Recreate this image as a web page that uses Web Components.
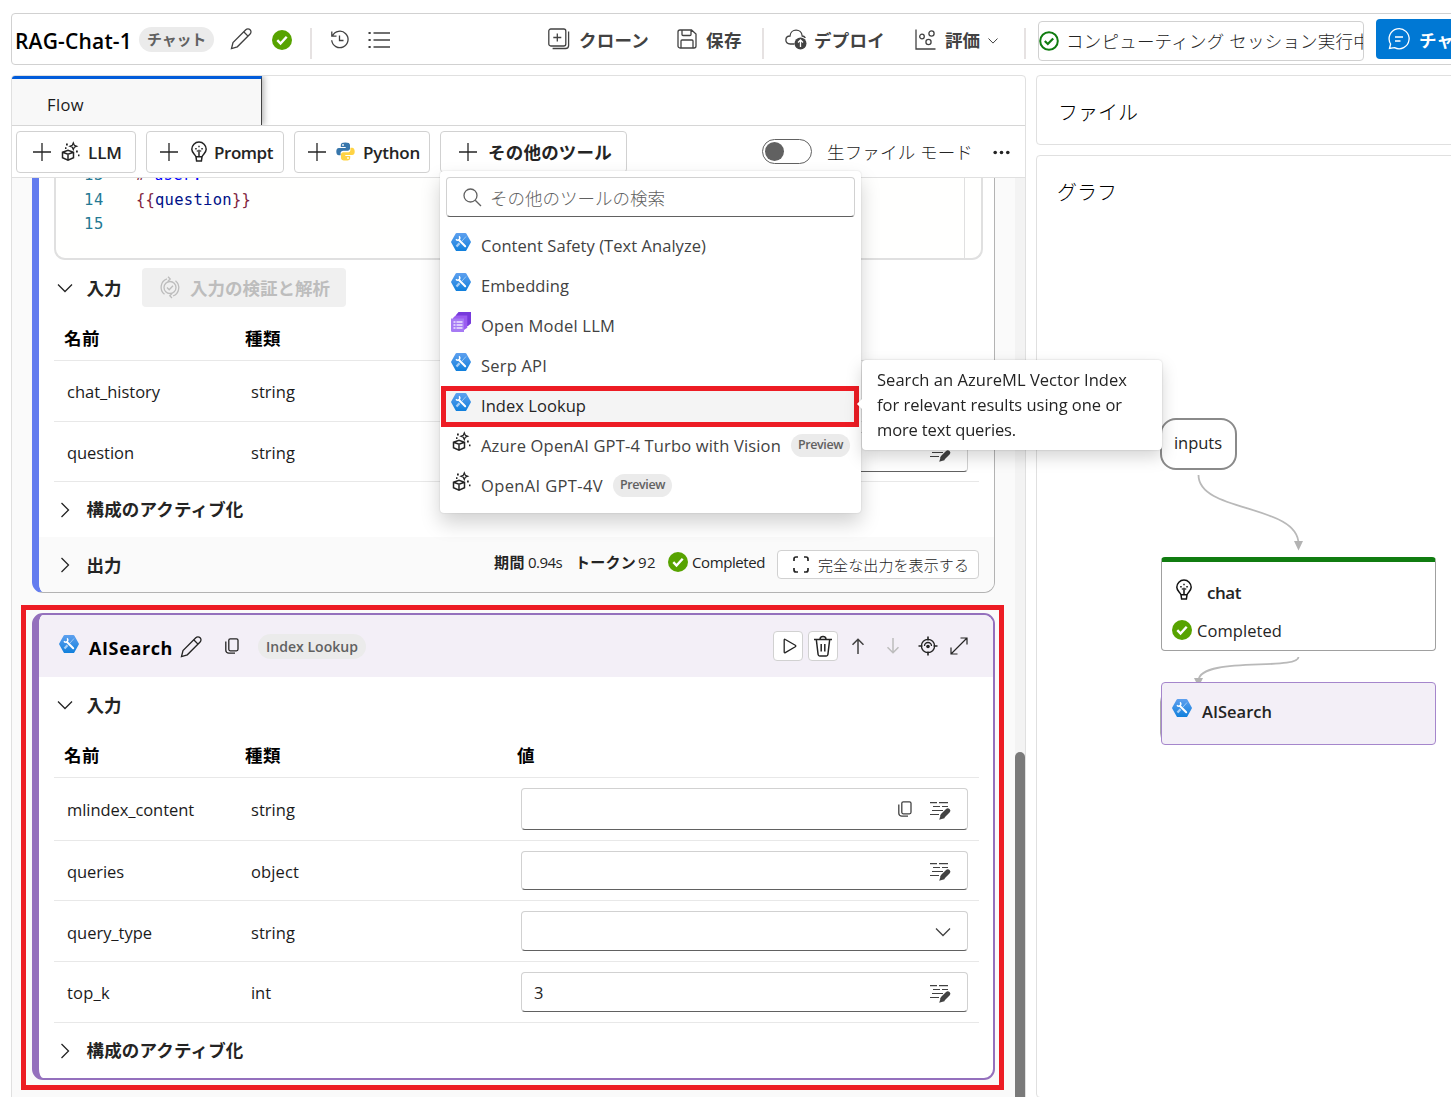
<!DOCTYPE html>
<html lang="ja">
<head>
<meta charset="utf-8">
<title>RAG-Chat-1</title>
<style>
    html, body {
        margin: 0;
        height: 1097px;
        overflow: hidden;
        background: #fff;
        color: #242424;
        font: 16.5px/24px "Open Sans", "Noto Sans CJK JP", sans-serif;
    }
</style>
</head>
<body>
<flow-page></flow-page>

<script>
const HEX = `
    <defs><linearGradient id="g" x2="0" y2="1"><stop stop-color="#5ea0ef"/><stop offset="1" stop-color="#1180dc"/></linearGradient></defs>
    <path fill="url(#g)" stroke="none" d="M5.6 1h8.8q.6 0 .9.5l4.500 8q.3.500 0 1l-4.500 8q-.3.500-.9.500H5.600q-.6 0-.9-.5l-4.500-8q-.3-.5 0-1l4.500-8q.3-.5.9-.5z"/>
    <path stroke="#9cc9f5" stroke-width="1" d="M15 4.500 11 9"/><path stroke="#a8d0f7" stroke-width="2.200" d="M8.500 11.300 5.500 14.500"/>
    <path stroke="#fff" stroke-width="2" stroke-linecap="round" d="M8 8l6.200 6.200"/>
    <path stroke="#fff" stroke-width="1.500" d="M5 7.300q1.500 1.700 3.300.2 1.200-1.600-.1-3.300"/>`;

// name: [width, height, markup]
const ICONS = {
    pencil: [22, 23, `<path d="M1.500 21.500 3 15.500 15.800 2.700a3 3 0 0 1 4.300 4.300L7.300 19.800z"/><path d="m13.700 4.800 4.300 4.300"/>`],
    ok: [20, 20, `<circle cx="10" cy="10" r="10" fill="#57a300" stroke="none"/><path stroke="#fff" stroke-width="2.400" d="m5.300 10.200 3.200 3.300 6.200-6.800"/>`],
    okRing: [20, 20, `<circle cx="10" cy="10" r="8.800" stroke="#107c10" stroke-width="2"/><path stroke="#107c10" stroke-width="2.200" d="m5.800 10 3 3 5.400-5.600"/>`],
    history: [20, 20, `<path d="M2.500 5.800a8.200 8.200 0 1 1-.8 4.500M1.800 1.500v4.600h4.700M9.500 5.500v5h4"/>`],
    list: [22, 18, `<path d="M5.500 2H22M5.500 9H22M5.500 16H22"/><path stroke-width="2.200" d="M.5 2h2.200M.5 9h2.200M.5 16h2.200"/>`],
    clone: [22, 22, `<rect x=".8" y="1" width="17" height="17" rx="2"/><path d="M9.300 5.500v8M5.300 9.500h8M20.600 3.500v14a3 3 0 0 1-3 3h-13"/>`],
    save: [20, 20, `<path d="M3 1h11.500L19 5v12a2 2 0 0 1-2 2H3a2 2 0 0 1-2-2V3a2 2 0 0 1 2-2zM5 1v4.500q0 1 1 1h7q1 0 1-1V1M4 19v-7q0-1 1-1h10q1 0 1 1v7"/>`],
    cloud: [22, 21, `<path d="M9.500 15H5.200C-.8 15-.3 7 5 7c.5-7.500 11.500-8 12.200 0 1.300 0 2.500.8 3.200 1.800"/><circle cx="15.500" cy="14.500" r="6" fill="currentColor" stroke="none"/><path stroke="#fff" d="M15.500 18v-6.500M13 13.500l2.500-2.500 2.500 2.500"/>`],
    scatter: [21, 21, `<path d="M1 .5V20h19.500"/><circle cx="7" cy="7.500" r="2.300"/><circle cx="16.500" cy="4.500" r="2.600"/><circle cx="13.500" cy="13" r="2.600"/>`],
    chevronSmall: [10, 6, `<path stroke-width="1" d="m.5.500 4.500 4.600L9.500.5"/>`],
    chevronDown: [16, 10, `<path d="m1 1.500 7 7 7-7"/>`],
    chevronRight: [10, 16, `<path d="m1.500 1 7 7-7 7"/>`],
    chat: [22, 22, `<path d="M1.500 20.500 2.600 16A10 10 0 1 1 6.500 19.600zM7 9h8M7 13h5.500"/>`],
    plus: [18, 18, `<path d="M9 0v18M0 9h18"/>`],
    cube: [19, 19, `<path stroke-width="1.500" d="m1.500 10.200 5.500-2 5.500 2v5.600L7 18.200l-5.500-2.400zM1.500 10.200 7 12.300l5.500-2.100M7 12.300v5.900"/><path d="m12.300.8 1 2.400 2.500 1-2.500 1-1 2.500-1-2.500-2.500-1 2.500-1z" stroke-width="1.200"/><path stroke-width="1.800" d="M5 2.500h1.800M15 9.500h1.800M4 6.200h1.500M17 13.300h1.500"/>`],
    bulb: [16, 20, `<path stroke-width="1.500" d="M5 14.800C4.500 12.500.8 11 .8 7.300a7.200 7.200 0 0 1 14.400 0c0 3.700-3.700 5.200-4.200 7.500zM5 14.800l.6 4.300h4.800l.6-4.300M8 14.500V7.800"/><path stroke-width="1.500" d="M4.200 6.800h1.500M10.300 6.800h1.500M7.300 4.500h1.400M5.800 9h1M9.200 9h1"/>`],
    python: [19, 19, `<path fill="#3776ab" stroke="none" d="M9.300.5c-3 0-4.500.8-4.500 2.600v2h4.900v.8H2.900C1 5.900.3 7.500.3 9.500s.8 3.800 2.600 3.800h1.700v-2.200c0-1.400 1.200-2.300 2.500-2.300h4.700c1.200 0 2.200-1 2.200-2.200V3.100c0-1.800-1.700-2.600-4.700-2.600z"/><path fill="#ffd343" stroke="none" d="M9.700 18.500c3 0 4.500-.8 4.500-2.600v-2H9.300v-.8h6.800c1.900 0 2.600-1.600 2.600-3.600s-.8-3.800-2.600-3.800h-1.700v2.200c0 1.400-1.200 2.300-2.500 2.300H7.200c-1.200 0-2.200 1-2.200 2.200v3.500c0 1.800 1.700 2.600 4.700 2.600z"/><circle cx="7" cy="3" r=".9" fill="#fff" stroke="none"/><circle cx="12" cy="16" r=".9" fill="#fff" stroke="none"/>`],
    dots: [17, 5, `<g fill="currentColor" stroke="none"><circle cx="2.200" cy="2.500" r="1.800"/><circle cx="8.500" cy="2.500" r="1.800"/><circle cx="14.800" cy="2.500" r="1.800"/></g>`],
    search: [19, 19, `<circle cx="7.500" cy="7.500" r="6.500"/><path d="m12.200 12.200 5.800 5.800"/>`],
    hex: [20, 20, HEX],
    layers: [20, 20, `<path fill="#773adc" stroke="none" d="M7.500 0H20v11.500L17 14H5V3z"/><path fill="#9b5cf0" stroke="none" d="M4.500 3.500h11.800v12.300L13 18H2V6z"/><path fill="#a67af4" stroke="none" d="M0 6.500h13V20H1.500Q0 20 0 18.500z"/><path stroke="#f0e6ff" stroke-width="1.700" d="M2.500 10h2M5.500 10h6M2.500 13h2M5.500 13h6M2.500 16h2M5.500 16h6"/>`],
    verify: [20, 23, `<path d="M7 2.800a9 9 0 0 0-2.500 15.500M13 20a9 9 0 0 0 2.500-15.300M8 .8l2.200 2.200L8 5.200M12 22l-2.200-2.200L12 17.600"/><circle cx="10" cy="11.500" r="6"/><path d="m7 11.500 2.200 2.200 3.800-4"/>`],
    copy: [14, 16, `<rect x="3.800" y=".8" width="9.200" height="12" rx="1.500"/><path d="M.8 3.500v8.700a3 3 0 0 0 3 3H10"/>`],
    play: [14, 16, `<path d="M1.200 2v12q0 1.200 1.100.6l10-5.800q1-.8 0-1.500l-10-5.800Q1.200.8 1.200 2z"/>`],
    trash: [20, 22, `<path stroke-width="1.500" d="M1 4.500h18M3.300 4.500l1.800 15q.2 1.500 1.600 1.500h6.600q1.400 0 1.600-1.500l1.800-15M7 4.500q0-3 3-3t3 3M8.200 9v7.500M11.800 9v7.500"/>`],
    up: [14, 16, `<path stroke-width="1.500" d="M7 16V1M1.500 6.800 7 1.200l5.500 5.600"/>`],
    down: [14, 16, `<path stroke-width="1.500" d="M7 0v15M1.500 9.200 7 14.800l5.500-5.600"/>`],
    target: [20, 20, `<circle cx="10" cy="10" r="6.600"/><path stroke-width="1.600" d="M10 .5v4M10 15.500v4M.5 10h4M15.500 10h4"/><path d="M6.500 10a3.500 3.500 0 0 1 7 0"/><circle cx="10" cy="10.500" r="1.800" fill="currentColor" stroke="none"/>`],
    expand: [18, 18, `<path stroke-width="1.200" d="M1.500 16.500l15-15M10.500 1h6.500v6.500M1 10.500V17h6.500"/>`],
    frame: [16, 17, `<path stroke-width="1.700" d="M1 5V3q0-2 2-2h2M11 1h2q2 0 2 2v2M15 12v2q0 2-2 2h-2M5 16H3q-2 0-2-2v-2"/>`],
    edit: [22, 19, `<path stroke-width="1.200" d="M1 1.700h7M10 1.700h9M4 5.500h7M13 5.500h6M3 9.500h11M1 13.500h9"/><path stroke-width="5" stroke-linecap="round" d="M18.800 9.800 14 14.600"/><path fill="currentColor" stroke="none" d="m12 13-1.800 5.800L16 17z"/>`]
};

class UiIcon extends HTMLElement {
    connectedCallback() {
        const [w, h, art] = ICONS[this.getAttribute('name')];
        this.attachShadow({ mode: 'open' }).innerHTML = `
            <style>
                :host { display: block; flex: none; width: ${w}px; height: ${h}px; }
                svg { display: block; overflow: visible; }
            </style>
            <svg width="${w}" height="${h}" viewBox="0 0 ${w} ${h}" fill="none" stroke="currentColor" stroke-width="1.3">${art}</svg>
        `;
    }
}
customElements.define('ui-icon', UiIcon);

// One line of text, tracked so that it fills the width in "w"
class FitText extends HTMLElement {
    connectedCallback() {
        const w = Number(this.getAttribute('w'));
        this.attachShadow({ mode: 'open' }).innerHTML = `
            <style>
                :host { display: block; flex: none; width: ${w}px; white-space: nowrap; }
                :host([light]) { font-weight: 300; }
                :host([semi]) { font-weight: 600; }
                :host([bold]) { font-weight: 700; }
                span { display: inline-block; }
            </style>
            <span><slot></slot></span>
        `;
        const span = this.shadowRoot.querySelector('span');
        const gap = (w - span.getBoundingClientRect().width) / this.textContent.length;
        span.style.letterSpacing = gap.toFixed(3) + 'px';
    }
}
customElements.define('fit-text', FitText);

class UiPill extends HTMLElement {
    connectedCallback() {
        this.attachShadow({ mode: 'open' }).innerHTML = `
            <style>
                :host {
                    display: flex;
                    flex: none;
                    align-items: center;
                    box-sizing: border-box;
                    height: 25px;
                    padding: 0 8px;
                    border-radius: 13px;
                    background: #ebebeb;
                    color: #616161;
                    font-weight: 600;
                    font-size: 14px;
                }
            </style>
            <slot></slot>
        `;
    }
}
customElements.define('ui-pill', UiPill);

class AppHeader extends HTMLElement {
    connectedCallback() {
        this.attachShadow({ mode: 'open' }).innerHTML = `
            <style>
                :host {
                    display: flex;
                    align-items: center;
                    box-sizing: border-box;
                    width: 1520px;
                    height: 52px;
                    border: 1px solid #d1d1d1;
                    border-radius: 4px;
                    color: #424242;
                    font-size: 17.5px;
                }
                .title { color: #000; font-size: 21px; margin: 4px 7px 0 3px; }
                .rule { flex: none; width: 2px; height: 31px; background: #e6e2e2; margin-top: 9px; }
                .session {
                    display: flex;
                    flex: none;
                    align-items: center;
                    box-sizing: border-box;
                    width: 326px;
                    height: 40px;
                    margin: 3px 12px 0 12px;
                    border: 1px solid #d1d1d1;
                    border-radius: 4px;
                    overflow: hidden;
                    color: #242424;
                }
                .chat {
                    display: flex;
                    align-items: center;
                    flex: none;
                    width: 140px;
                    height: 40px;
                    border-radius: 4px 0 0 4px;
                    background: #0078d4;
                    color: #fff;
                }
            </style>
            <fit-text class="title" semi w="117">RAG-Chat-1</fit-text>
            <ui-pill><fit-text bold w="59" style="font-size:15px">チャット</fit-text></ui-pill>
            <ui-icon name="pencil" style="margin:-1px 0 0 16px"></ui-icon>
            <ui-icon name="ok" style="margin:2px 0 0 20px"></ui-icon>
            <div class="rule" style="margin-left:18px"></div>
            <ui-icon name="history" style="margin:1px 0 0 18px"></ui-icon>
            <ui-icon name="list" style="margin:1px 0 0 18px"></ui-icon>
            <ui-icon name="clone" style="margin-left:158px"></ui-icon>
            <fit-text bold w="70" style="margin:1px 0 0 9px">クローン</fit-text>
            <ui-icon name="save" style="margin-left:28px"></ui-icon>
            <fit-text bold w="36" style="margin:1px 0 0 9px">保存</fit-text>
            <div class="rule" style="margin-left:20px"></div>
            <ui-icon name="cloud" style="margin-left:21px"></ui-icon>
            <fit-text bold w="71" style="margin:1px 0 0 7px">デプロイ</fit-text>
            <ui-icon name="scatter" style="margin-left:30px"></ui-icon>
            <fit-text bold w="35" style="margin:1px 0 0 9px">評価</fit-text>
            <ui-icon name="chevronSmall" style="margin:3px 0 0 8px"></ui-icon>
            <div class="rule" style="margin-left:26px"></div>
            <div class="session">
                <ui-icon name="okRing"></ui-icon>
                <fit-text light w="305" style="margin-left:7px">コンピューティング セッション実行中</fit-text>
            </div>
            <div class="chat">
                <ui-icon name="chat" style="margin-left:12px"></ui-icon>
                <fit-text bold w="70" style="margin:1px 0 0 9px">チャット</fit-text>
            </div>
        `;
    }
}
customElements.define('app-header', AppHeader);

class ToolButton extends HTMLElement {
    connectedCallback() {
        this.attachShadow({ mode: 'open' }).innerHTML = `
            <style>
                :host {
                    display: flex;
                    flex: none;
                    align-items: center;
                    box-sizing: border-box;
                    width: ${this.getAttribute('w')}px;
                    height: 42px;
                    padding-left: ${this.getAttribute('pad')}px;
                    border: 1px solid #d1d1d1;
                    border-radius: 4px;
                    background: #fff;
                    font-size: 17px;
                }
                ::slotted(fit-text) { padding-top: 2px; }
            </style>
            <ui-icon name="plus"></ui-icon>
            <slot></slot>
        `;
    }
}
customElements.define('tool-button', ToolButton);

class FlowToolbar extends HTMLElement {
    connectedCallback() {
        this.attachShadow({ mode: 'open' }).innerHTML = `
            <style>
                :host {
                    display: flex;
                    align-items: center;
                    height: 51px;
                    padding-left: 4px;
                    gap: 10px;
                    border-bottom: 1px solid #e0e0e0;
                    background: #fff;
                }
                .toggle {
                    box-sizing: border-box;
                    width: 50px;
                    height: 25px;
                    margin-left: 125px;
                    padding: 2px;
                    border: 1px solid #616161;
                    border-radius: 13px;
                }
                .knob { width: 19px; height: 19px; border-radius: 50%; background: #616161; }
            </style>
            <tool-button w="120" pad="16">
                <ui-icon name="cube" style="margin-left:10px"></ui-icon>
                <fit-text semi w="34" style="margin-left:8px">LLM</fit-text>
            </tool-button>
            <tool-button w="138" pad="13">
                <ui-icon name="bulb" style="margin-left:13px"></ui-icon>
                <fit-text semi w="59" style="margin-left:7px">Prompt</fit-text>
            </tool-button>
            <tool-button w="136" pad="13">
                <ui-icon name="python" style="margin-left:10px"></ui-icon>
                <fit-text semi w="57" style="margin-left:8px">Python</fit-text>
            </tool-button>
            <tool-button w="187" pad="18">
                <fit-text bold w="124" style="margin-left:11px;padding:0;font-size:17.5px">その他のツール</fit-text>
            </tool-button>
            <div class="toggle"><div class="knob"></div></div>
            <fit-text light w="146" style="margin-left:5px;font-size:17.5px">生ファイル モード</fit-text>
            <ui-icon name="dots" style="margin:1px 0 0 10px"></ui-icon>
        `;
    }
}
customElements.define('flow-toolbar', FlowToolbar);

class CodeBox extends HTMLElement {
    connectedCallback() {
        this.attachShadow({ mode: 'open' }).innerHTML = `
            <style>
                :host {
                    display: flex;
                    box-sizing: border-box;
                    width: 929px;
                    height: 82px;
                    border: 2px solid #e0e0e0;
                    border-top: 0;
                    border-radius: 0 0 11px 11px;
                    background: #fffffe;
                    overflow: hidden;
                }
                .lines { margin-top: -15px; width: 908px; border-right: 1px solid #e0e0e0; }
                .line { display: flex; height: 24.5px; font: 15.5px/24px "DejaVu Sans Mono", monospace; }
                .no { color: #237893; margin-left: 28px; margin-right: 32px; }
                .kw { color: #0000ff; }
                .br { color: #811f3f; }
                .id { color: #001188; }
            </style>
            <div class="lines">
                <div class="line"><fit-text class="no" w="20">13</fit-text><fit-text class="br" w="18">#</fit-text><fit-text class="kw" w="48">user:</fit-text></div>
                <div class="line"><fit-text class="no" w="20">14</fit-text><fit-text class="br" w="19">{{</fit-text><fit-text class="id" w="77">question</fit-text><fit-text class="br" w="19">}}</fit-text></div>
                <div class="line"><fit-text class="no" w="20">15</fit-text></div>
            </div>
        `;
    }
}
customElements.define('code-box', CodeBox);

class SectionRow extends HTMLElement {
    connectedCallback() {
        const open = this.hasAttribute('open');
        this.attachShadow({ mode: 'open' }).innerHTML = `
            <style>
                :host { display: flex; align-items: center; height: ${this.getAttribute('h')}px; font-size: 17.5px; }
                ui-icon { margin-left: ${open ? 18 : 21}px; margin-right: ${open ? 13.5 : 16.5}px; }
                fit-text { margin-right: 20.5px; padding-bottom: 1px; }
            </style>
            <ui-icon name="${open ? 'chevronDown' : 'chevronRight'}"></ui-icon>
            <fit-text bold w="${this.getAttribute('w')}">${this.getAttribute('label')}</fit-text>
            <slot></slot>
        `;
    }
}
customElements.define('section-row', SectionRow);

class ValueField extends HTMLElement {
    connectedCallback() {
        this.attachShadow({ mode: 'open' }).innerHTML = `
            <style>
                :host {
                    display: flex;
                    align-items: center;
                    box-sizing: border-box;
                    width: 447px;
                    padding: 2px 16px 0 12px;
                    border: 1px solid #d1d1d1;
                    border-bottom-color: #616161;
                    border-radius: 4px;
                    background: #fff;
                    color: #424242;
                }
                .value { flex: 1; color: #242424; }
            </style>
            <div class="value">${this.getAttribute('value') || ''}</div>
            <slot></slot>
        `;
    }
}
customElements.define('value-field', ValueField);

class InputRow extends HTMLElement {
    connectedCallback() {
        this.attachShadow({ mode: 'open' }).innerHTML = `
            <style>
                :host {
                    display: grid;
                    grid-template-columns: 184px 270px 1fr;
                    align-items: center;
                    box-sizing: border-box;
                    width: 925px;
                    height: ${this.getAttribute('h')}px;
                    margin-left: 15px;
                    padding-left: 13px;
                    border-bottom: 1px solid #e8e8e8;
                    color: #1b1b1b;
                }
                ::slotted(fit-text) { padding-top: 2px; }
                :host([low]) ::slotted(fit-text) { padding-top: 3px; }
                :host([head]) {
                    grid-template-columns: 181px 272px 1fr;
                    padding-left: 10px;
                    color: #000;
                    font-size: 17.5px;
                }
                :host([head]) ::slotted(fit-text) { padding: 0 0 1px; }
            </style>
            <slot></slot>
        `;
    }
}
customElements.define('input-row', InputRow);

class NodeCard extends HTMLElement {
    connectedCallback() {
        this.attachShadow({ mode: 'open' }).innerHTML = `
            <style>
                :host {
                    display: block;
                    box-sizing: border-box;
                    width: 963px;
                    margin-left: 20px;
                    border: 1px solid #b3b3b3;
                    border-left: 7px solid #637cef;
                    border-radius: 11px;
                    background: #fff;
                    overflow: hidden;
                }
                :host([first]) { border-top: 0; border-top-left-radius: 0; border-top-right-radius: 0; }
                :host([picked]) { border: 2px solid #9470bd; border-left-width: 7px; }
            </style>
            <slot></slot>
        `;
    }
}
customElements.define('node-card', NodeCard);

class NodeHeader extends HTMLElement {
    connectedCallback() {
        this.attachShadow({ mode: 'open' }).innerHTML = `
            <style>
                :host { display: flex; align-items: center; height: 62px; background: #f3eff7; color: #242424; }
                .tools { display: flex; align-items: center; margin-left: auto; margin-right: 25px; }
                .btn {
                    display: flex;
                    align-items: center;
                    justify-content: center;
                    box-sizing: border-box;
                    width: 30px;
                    height: 30px;
                    margin-right: 5px;
                    border: 1px solid #d1d1d1;
                    border-radius: 4px;
                    background: #fff;
                }
            </style>
            <ui-icon name="hex" style="margin:-5px 10px 0 20px"></ui-icon>
            <fit-text bold w="84" style="font-size:18px;color:#000;margin-top:4px">AISearch</fit-text>
            <ui-icon name="pencil" style="margin-left:7px"></ui-icon>
            <ui-icon name="copy" style="margin:0 19px 0 23px"></ui-icon>
            <ui-pill style="margin-top:1px"><fit-text semi w="92">Index Lookup</fit-text></ui-pill>
            <div class="tools">
                <div class="btn"><ui-icon name="play" style="margin-left:3px"></ui-icon></div>
                <div class="btn"><ui-icon name="trash"></ui-icon></div>
                <ui-icon name="up" style="margin-left:8px;color:#424242"></ui-icon>
                <ui-icon name="down" style="margin-left:21px;color:#bdbdbd"></ui-icon>
                <ui-icon name="target" style="margin-left:18px"></ui-icon>
                <ui-icon name="expand" style="margin-left:12px"></ui-icon>
            </div>
        `;
    }
}
customElements.define('node-header', NodeHeader);

class OutputBar extends HTMLElement {
    connectedCallback() {
        this.attachShadow({ mode: 'open' }).innerHTML = `
            <style>
                :host { display: flex; height: 55px; background: #fafafa; font-size: 15px; }
                .stats { display: flex; align-items: center; height: 50px; margin-left: auto; }
                .view {
                    display: flex;
                    align-items: center;
                    box-sizing: border-box;
                    width: 202px;
                    height: 29px;
                    margin: 13px 15px 0 12px;
                    padding-left: 15px;
                    border: 1px solid #d1d1d1;
                    border-radius: 4px;
                    background: #fff;
                }
            </style>
            <section-row h="56" w="35" label="出力"></section-row>
            <div class="stats">
                <fit-text bold w="31">期間</fit-text>
                <fit-text w="34" style="margin-left:3px">0.94s</fit-text>
                <fit-text bold w="61" style="margin-left:13px">トークン</fit-text>
                <fit-text w="18" style="margin-left:2px">92</fit-text>
                <ui-icon name="ok" style="margin-left:12px"></ui-icon>
                <fit-text w="73" style="margin-left:4px">Completed</fit-text>
            </div>
            <div class="view">
                <ui-icon name="frame"></ui-icon>
                <fit-text light w="151" style="margin-left:9px">完全な出力を表示する</fit-text>
            </div>
        `;
    }
}
customElements.define('output-bar', OutputBar);

class MenuItem extends HTMLElement {
    connectedCallback() {
        this.attachShadow({ mode: 'open' }).innerHTML = `
            <style>
                :host { display: flex; align-items: center; height: 40px; padding-left: 11px; color: #424242; }
                :host([marked]) {
                    box-sizing: border-box;
                    height: 41px;
                    margin: 1px 2px -2px 1px;
                    padding-left: 5px;
                    border: 5px solid #ed1c24;
                    background: #f4f4f4;
                    color: #242424;
                }
                ui-icon { margin-top: -7px; margin-right: 10px; }
                fit-text { margin-top: 2px; }
                :host([marked]) ui-icon { margin-top: -9px; }
                :host([marked]) fit-text { margin-top: -1px; }
                ui-pill { margin-left: 10px; height: 23px; padding: 0 7px; font-size: 12.5px; }
            </style>
            <ui-icon name="${this.getAttribute('icon')}" style="width:20px"></ui-icon>
            <fit-text w="${this.getAttribute('w')}">${this.getAttribute('label')}</fit-text>
            ${this.hasAttribute('preview') ? '<ui-pill><fit-text semi w="45" style="margin:0">Preview</fit-text></ui-pill>' : ''}
        `;
    }
}
customElements.define('menu-item', MenuItem);

class ToolMenu extends HTMLElement {
    connectedCallback() {
        this.attachShadow({ mode: 'open' }).innerHTML = `
            <style>
                :host {
                    display: block;
                    box-sizing: border-box;
                    width: 421px;
                    height: 342px;
                    padding-top: 6px;
                    border-radius: 4px;
                    background: #fff;
                    box-shadow: 0 0 2px rgba(0, 0, 0, .14), 0 10px 20px rgba(0, 0, 0, .18);
                }
                .search {
                    display: flex;
                    align-items: center;
                    box-sizing: border-box;
                    width: 409px;
                    height: 40px;
                    margin: 0 0 8px 6px;
                    padding-left: 16px;
                    border: 1px solid #d1d1d1;
                    border-bottom-color: #616161;
                    border-radius: 4px;
                    color: #616161;
                    font-size: 17.5px;
                }
            </style>
            <div class="search">
                <ui-icon name="search"></ui-icon>
                <fit-text light w="175" style="margin:1px 0 0 8px">その他のツールの検索</fit-text>
            </div>
            <menu-item icon="hex" w="225" label="Content Safety (Text Analyze)"></menu-item>
            <menu-item icon="hex" w="88" label="Embedding"></menu-item>
            <menu-item icon="layers" w="134" label="Open Model LLM"></menu-item>
            <menu-item icon="hex" w="66" label="Serp API"></menu-item>
            <menu-item marked icon="hex" w="105" label="Index Lookup"></menu-item>
            <menu-item icon="cube" w="300" label="Azure OpenAI GPT-4 Turbo with Vision" preview></menu-item>
            <menu-item icon="cube" w="122" label="OpenAI GPT-4V" preview></menu-item>
        `;
        // the cube glyphs sit a little further in than the filled badges
        this.shadowRoot.querySelectorAll('[icon="cube"]').forEach(item => {
            item.shadowRoot.querySelector('ui-icon').style.cssText = 'width:20px;margin:-7px 9px 0 1px;color:#242424';
        });
    }
}
customElements.define('tool-menu', ToolMenu);

class HoverTip extends HTMLElement {
    connectedCallback() {
        this.attachShadow({ mode: 'open' }).innerHTML = `
            <style>
                :host {
                    display: block;
                    box-sizing: border-box;
                    width: 300px;
                    height: 90px;
                    padding: 7px 15px;
                    border-radius: 4px;
                    background: #fff;
                    line-height: 25px;
                    filter: drop-shadow(0 0 1px rgba(0, 0, 0, .16)) drop-shadow(0 7px 8px rgba(0, 0, 0, .16));
                }
                i { position: absolute; left: -3px; top: 39px; width: 10px; height: 10px; background: #fff; transform: rotate(45deg); }
            </style>
            <i></i>
            <fit-text w="250">Search an AzureML Vector Index</fit-text>
            <fit-text w="245">for relevant results using one or</fit-text>
            <fit-text w="139">more text queries.</fit-text>
        `;
    }
}
customElements.define('hover-tip', HoverTip);

class FlowGraph extends HTMLElement {
    connectedCallback() {
        this.attachShadow({ mode: 'open' }).innerHTML = `
            <style>
                :host { display: block; position: relative; height: 941px; }
                .head { padding: 25px 0 0 20px; font-size: 20px; color: #000; }
                svg { position: absolute; left: 0; top: 0; }
                .node { position: absolute; box-sizing: border-box; background: #fff; }
                .inputs { left: 123px; top: 262px; width: 77px; height: 52px; border: 2px solid #8a8a8a; border-radius: 16px; padding: 11px 0 0 12px; }
                .chat { left: 124px; top: 401px; width: 275px; height: 94px; border: 1px solid #a0a0a0; border-top: 5px solid #107c10; border-radius: 4px; padding: 19px 10px; }
                .ghost { left: 123px; top: 534px; width: 70px; height: 55px; border: 1.500px solid #aaa; border-radius: 12px; }
                .search { left: 124px; top: 526px; width: 275px; height: 63px; border: 1px solid #a586cc; border-radius: 4px; background: #f3eff7; padding: 17px 10px; }
                .row { display: flex; align-items: center; }
            </style>
            <div class="head"><fit-text light w="60">グラフ</fit-text></div>
            <svg width="414" height="941" fill="none" stroke="#b9b9b9" stroke-width="1.800">
                <path d="M161.500 319C161.500 357 261.500 348 261.500 388M261.500 501C261.500 515 161.500 500 161.500 525"/>
                <path fill="#b3b3b3" stroke="none" d="M257 385h9l-4.500 9.500zM157 522h9l-4.500 9z"/>
            </svg>
            <div class="node inputs"><fit-text w="48">inputs</fit-text></div>
            <div class="node chat">
                <div class="row"><ui-icon name="bulb" style="margin:-6px 15px 0 4px;color:#111"></ui-icon><fit-text semi w="34" style="font-size:17px">chat</fit-text></div>
                <div class="row" style="margin-top:14px"><ui-icon name="ok" style="margin:-3px 5px 0 0"></ui-icon><fit-text w="85">Completed</fit-text></div>
            </div>
            <div class="node ghost"></div>
            <div class="node search">
                <div class="row"><ui-icon name="hex" style="margin:-8px 10px 0 0"></ui-icon><fit-text semi w="70">AISearch</fit-text></div>
            </div>
        `;
    }
}
customElements.define('flow-graph', FlowGraph);

class FlowPage extends HTMLElement {
    connectedCallback() {
        this.attachShadow({ mode: 'open' }).innerHTML = `
            <style>
                :host { display: block; position: relative; box-sizing: border-box; width: 1451px; height: 1097px; padding: 13px 0 0 11px; overflow: hidden; }
                .columns { display: flex; gap: 10px; margin-top: 10px; }
                .flow { box-sizing: border-box; width: 1015px; height: 1030px; border: 1px solid #e0e0e0; border-radius: 4px; overflow: hidden; }
                .tabs { height: 49px; border-bottom: 1px solid #d6d6d6; overflow: hidden; }
                .tab { box-sizing: border-box; width: 250px; height: 49px; padding: 14px 0 0 35px; border-top: 3px solid #015cda; border-right: 1px solid #424242; background: #f8f8f8; box-shadow: 2px 0 6px rgba(0, 0, 0, .3); color: #1b1b1b; }
                .scroll { display: flex; height: 930px; background: #fafafa; }
                .nodes { flex: 1; overflow: hidden; }
                .track { width: 10px; background: #f3f3f3; }
                .thumb { height: 400px; margin-top: 574px; border-radius: 5px; background: #7a7a7a; }
                .side { width: 414px; }
                .panel { box-sizing: border-box; width: 450px; border: 1px solid #e0e0e0; border-radius: 4px; }
                .files { height: 70px; margin-bottom: 10px; padding: 25px 0 0 21px; font-size: 20px; color: #000; }
                .verify { display: flex; align-items: center; width: 204px; height: 39px; margin-bottom: 1px; border-radius: 4px; background: #f0f0f0; color: #bdbdbd; }
                .outline { position: absolute; box-sizing: border-box; left: 21px; top: 605px; width: 983px; height: 485px; border: 5px solid #ed1c24; }
                tool-menu { position: absolute; left: 440px; top: 171px; }
                hover-tip { position: absolute; left: 862px; top: 360px; }
            </style>
            <app-header></app-header>
            <div class="columns">
                <div class="flow">
                    <div class="tabs"><div class="tab"><fit-text w="37">Flow</fit-text></div></div>
                    <flow-toolbar></flow-toolbar>
                    <div class="scroll">
                        <div class="nodes">
                            <node-card first>
                                <code-box style="margin-left:15px"></code-box>
                                <section-row open h="56" w="35" label="入力">
                                    <div class="verify">
                                        <ui-icon name="verify" style="margin-left:18px"></ui-icon>
                                        <fit-text bold w="140" style="margin-left:10px">入力の検証と解析</fit-text>
                                    </div>
                                </section-row>
                                <input-row head h="45"><fit-text bold w="36">名前</fit-text><fit-text bold w="36">種類</fit-text></input-row>
                                <input-row h="61"><fit-text w="93">chat_history</fit-text><fit-text w="44">string</fit-text></input-row>
                                <input-row low h="60"><fit-text w="67">question</fit-text><fit-text w="44">string</fit-text><value-field style="height:40px"><ui-icon name="edit"></ui-icon></value-field></input-row>
                                <section-row h="55" w="157" label="構成のアクティブ化"></section-row>
                                <output-bar></output-bar>
                            </node-card>
                            <node-card picked style="margin-top:20px">
                                <node-header></node-header>
                                <section-row open h="56" w="35" label="入力"></section-row>
                                <input-row head h="45"><fit-text bold w="36">名前</fit-text><fit-text bold w="36">種類</fit-text><fit-text bold w="18">値</fit-text></input-row>
                                <input-row h="63"><fit-text w="127">mlindex_content</fit-text><fit-text w="44">string</fit-text><value-field style="height:42px"><ui-icon name="copy" style="margin:-2px 17px 0 0"></ui-icon><ui-icon name="edit"></ui-icon></value-field></input-row>
                                <input-row low h="60"><fit-text w="57">queries</fit-text><fit-text w="48">object</fit-text><value-field style="height:39px"><ui-icon name="edit"></ui-icon></value-field></input-row>
                                <input-row low h="61"><fit-text w="85">query_type</fit-text><fit-text w="44">string</fit-text><value-field style="height:40px"><ui-icon name="chevronDown"></ui-icon></value-field></input-row>
                                <input-row h="61"><fit-text w="43">top_k</fit-text><fit-text w="20">int</fit-text><value-field value="3" style="height:40px"><ui-icon name="edit"></ui-icon></value-field></input-row>
                                <section-row h="55" w="157" label="構成のアクティブ化"></section-row>
                            </node-card>
                        </div>
                        <div class="track"><div class="thumb"></div></div>
                    </div>
                </div>
                <div class="side">
                    <div class="panel files"><fit-text light w="80">ファイル</fit-text></div>
                    <div class="panel"><flow-graph></flow-graph></div>
                </div>
            </div>
            <div class="outline"></div>
            <tool-menu></tool-menu>
            <hover-tip></hover-tip>
        `;
    }
}
customElements.define('flow-page', FlowPage);
</script>
</body>
</html>
